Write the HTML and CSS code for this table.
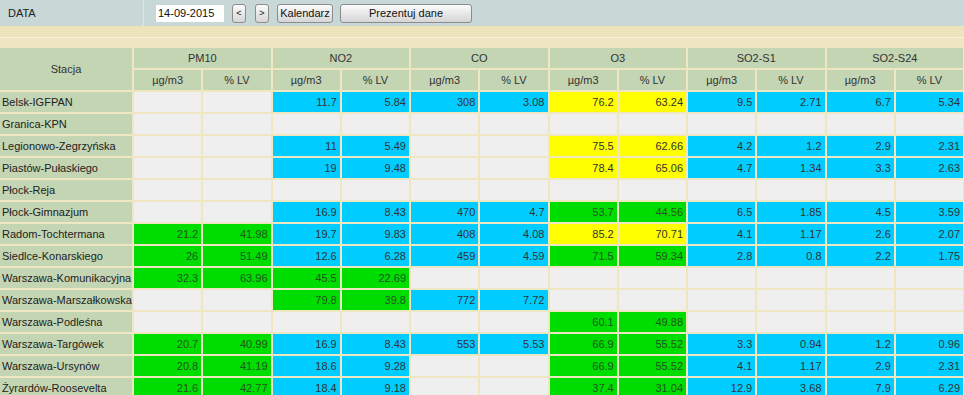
FILE: index.html
```html
<!DOCTYPE html>
<html lang="pl">
<head>
<meta charset="utf-8">
<title>Dane</title>
<link rel="stylesheet" href="styles.css">
</head>
<body>
<div class="topbar">
  <div class="label">DATA</div>
  <div class="controls">
    <input class="date" type="text" value="14-09-2015">
    <button class="btn small">&lt;</button>
    <button class="btn small">&gt;</button>
    <button class="btn cal">Kalendarz</button>
    <button class="btn show">Prezentuj dane</button>
  </div>
</div>
<div class="band1"></div>
<div class="bandline"></div>
<div class="band2"></div>
<table class="data">
  <colgroup>
    <col class="c-st">
    <col class="c"><col class="c"><col class="c"><col class="c"><col class="c"><col class="c">
    <col class="c"><col class="c"><col class="c"><col class="c"><col class="c"><col class="c">
  </colgroup>
  <thead>
    <tr>
      <th rowspan="2">Stacja</th>
      <th colspan="2">PM10</th>
      <th colspan="2">NO2</th>
      <th colspan="2">CO</th>
      <th colspan="2">O3</th>
      <th colspan="2">SO2-S1</th>
      <th colspan="2">SO2-S24</th>
    </tr>
    <tr>
      <th>µg/m3</th><th>% LV</th>
      <th>µg/m3</th><th>% LV</th>
      <th>µg/m3</th><th>% LV</th>
      <th>µg/m3</th><th>% LV</th>
      <th>µg/m3</th><th>% LV</th>
      <th>µg/m3</th><th>% LV</th>
    </tr>
  </thead>
  <tbody>
    <tr><td class="st">Belsk-IGFPAN</td>
      <td></td><td></td>
      <td class="b">11.7</td><td class="b">5.84</td>
      <td class="b">308</td><td class="b">3.08</td>
      <td class="y">76.2</td><td class="y">63.24</td>
      <td class="b">9.5</td><td class="b">2.71</td>
      <td class="b">6.7</td><td class="b">5.34</td></tr>
    <tr><td class="st">Granica-KPN</td>
      <td></td><td></td><td></td><td></td><td></td><td></td><td></td><td></td><td></td><td></td><td></td><td></td></tr>
    <tr><td class="st">Legionowo-Zegrzyńska</td>
      <td></td><td></td>
      <td class="b">11</td><td class="b">5.49</td>
      <td></td><td></td>
      <td class="y">75.5</td><td class="y">62.66</td>
      <td class="b">4.2</td><td class="b">1.2</td>
      <td class="b">2.9</td><td class="b">2.31</td></tr>
    <tr><td class="st">Piastów-Pułaskiego</td>
      <td></td><td></td>
      <td class="b">19</td><td class="b">9.48</td>
      <td></td><td></td>
      <td class="y">78.4</td><td class="y">65.06</td>
      <td class="b">4.7</td><td class="b">1.34</td>
      <td class="b">3.3</td><td class="b">2.63</td></tr>
    <tr><td class="st">Płock-Reja</td>
      <td></td><td></td><td></td><td></td><td></td><td></td><td></td><td></td><td></td><td></td><td></td><td></td></tr>
    <tr><td class="st">Płock-Gimnazjum</td>
      <td></td><td></td>
      <td class="b">16.9</td><td class="b">8.43</td>
      <td class="b">470</td><td class="b">4.7</td>
      <td class="g">53.7</td><td class="g">44.56</td>
      <td class="b">6.5</td><td class="b">1.85</td>
      <td class="b">4.5</td><td class="b">3.59</td></tr>
    <tr><td class="st">Radom-Tochtermana</td>
      <td class="g">21.2</td><td class="g">41.98</td>
      <td class="b">19.7</td><td class="b">9.83</td>
      <td class="b">408</td><td class="b">4.08</td>
      <td class="y">85.2</td><td class="y">70.71</td>
      <td class="b">4.1</td><td class="b">1.17</td>
      <td class="b">2.6</td><td class="b">2.07</td></tr>
    <tr><td class="st">Siedlce-Konarskiego</td>
      <td class="g">26</td><td class="g">51.49</td>
      <td class="b">12.6</td><td class="b">6.28</td>
      <td class="b">459</td><td class="b">4.59</td>
      <td class="g">71.5</td><td class="g">59.34</td>
      <td class="b">2.8</td><td class="b">0.8</td>
      <td class="b">2.2</td><td class="b">1.75</td></tr>
    <tr><td class="st">Warszawa-Komunikacyjna</td>
      <td class="g">32.3</td><td class="g">63.96</td>
      <td class="g">45.5</td><td class="g">22.69</td>
      <td></td><td></td><td></td><td></td><td></td><td></td><td></td><td></td></tr>
    <tr><td class="st">Warszawa-Marszałkowska</td>
      <td></td><td></td>
      <td class="g">79.8</td><td class="g">39.8</td>
      <td class="b">772</td><td class="b">7.72</td>
      <td></td><td></td><td></td><td></td><td></td><td></td></tr>
    <tr><td class="st">Warszawa-Podleśna</td>
      <td></td><td></td><td></td><td></td><td></td><td></td>
      <td class="g">60.1</td><td class="g">49.88</td>
      <td></td><td></td><td></td><td></td></tr>
    <tr><td class="st">Warszawa-Targówek</td>
      <td class="g">20.7</td><td class="g">40.99</td>
      <td class="b">16.9</td><td class="b">8.43</td>
      <td class="b">553</td><td class="b">5.53</td>
      <td class="g">66.9</td><td class="g">55.52</td>
      <td class="b">3.3</td><td class="b">0.94</td>
      <td class="b">1.2</td><td class="b">0.96</td></tr>
    <tr><td class="st">Warszawa-Ursynów</td>
      <td class="g">20.8</td><td class="g">41.19</td>
      <td class="b">18.6</td><td class="b">9.28</td>
      <td></td><td></td>
      <td class="g">66.9</td><td class="g">55.52</td>
      <td class="b">4.1</td><td class="b">1.17</td>
      <td class="b">2.9</td><td class="b">2.31</td></tr>
    <tr><td class="st">Żyrardów-Roosevelta</td>
      <td class="g">21.6</td><td class="g">42.77</td>
      <td class="b">18.4</td><td class="b">9.18</td>
      <td></td><td></td>
      <td class="g">37.4</td><td class="g">31.04</td>
      <td class="b">12.9</td><td class="b">3.68</td>
      <td class="b">7.9</td><td class="b">6.29</td></tr>
  </tbody>
</table>
</body>
</html>
```
FILE: styles.css
```css
html, body {
  margin: 0;
  padding: 0;
  overflow: hidden;
  background: #efe6c2;
}
body {
  font-family: "Liberation Sans", Arial, sans-serif;
  font-size: 11px;
  color: #333333;
  width: 964px;
}
.topbar {
  display: flex;
  height: 26px;
  background: #c8d8d6;
}
.label {
  width: 135px;
  padding-left: 8px;
  line-height: 26px;
  border-right: 1px solid #dde6dc;
  font-size: 11px;
  color: #222;
}
.controls {
  display: flex;
  align-items: center;
  padding-left: 12px;
}
.date {
  box-sizing: border-box;
  width: 68px;
  height: 17px;
  border: none;
  background: #ffffff;
  font-family: "Liberation Sans", Arial, sans-serif;
  font-size: 11px;
  color: #111;
  padding: 0 0 0 2px;
  margin: 0 8px 0 0;
  outline: none;
}
.btn {
  box-sizing: border-box;
  height: 19px;
  margin: 0 9px 0 0;
  padding: 0;
  border: 1px solid #8c8c8c;
  border-radius: 3px;
  background: linear-gradient(#fbfbfb, #e4e4e4 60%, #d6d6d6);
  font-family: "Liberation Sans", Arial, sans-serif;
  font-size: 11px;
  color: #111;
}
.btn.small {
  width: 14px;
  font-size: 9px;
}
.btn.small + .btn.small {
  margin-right: 8px;
}
.btn.cal {
  width: 56px;
  margin-right: 7px;
}
.btn.show {
  width: 132px;
}
.band1 {
  height: 11px;
  background: #eee4bc;
}
.bandline {
  height: 1px;
  background: #f8f1dc;
}
.band2 {
  height: 8px;
  background: #efe6c2;
}
.data {
  border-collapse: separate;
  border-spacing: 2px;
  margin-left: -2px;
  table-layout: fixed;
  width: 967px;
  background: #efe6c2;
}
.c-st {
  width: 132px;
}
.c {
  width: 67.25px;
}
.data th {
  background: #c3d5b3;
  font-weight: normal;
  height: 20px;
  padding: 0;
  text-align: center;
  color: #333;
  white-space: nowrap;
}
.data td {
  height: 20px;
  padding: 0 3px 0 0;
  background: #efefef;
  text-align: right;
  white-space: nowrap;
  color: #333;
}
.data td.st {
  background: #c3d5b3;
  text-align: left;
  padding: 0 0 0 2px;
  color: #222;
}
.data td.b {
  background: #00ccff;
}
.data td.g {
  background: #00dd00;
  color: #225522;
}
.data td.y {
  background: #ffff00;
}
```
